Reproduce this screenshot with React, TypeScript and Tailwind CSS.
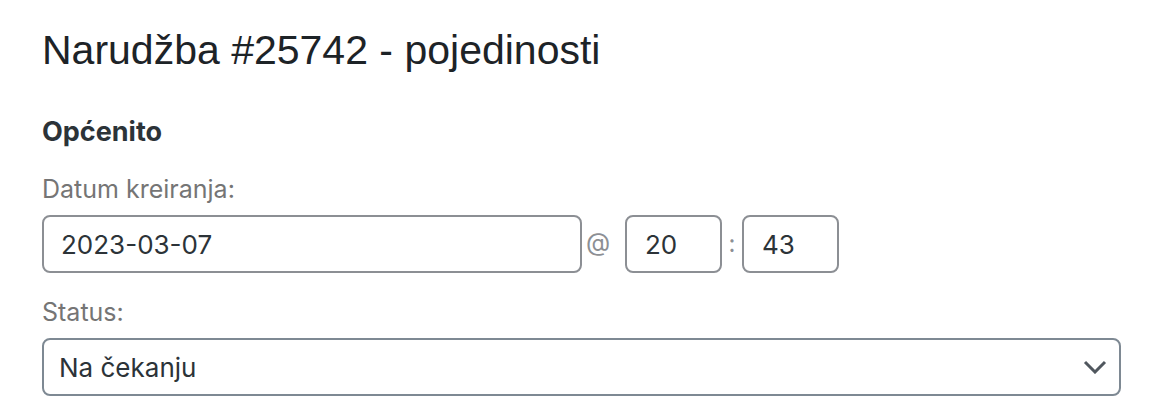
export default function App() {
  return (
    <div className="h-[412px] w-[1154px] bg-white pl-[42px] pr-[33px] pt-[25px] text-[#2c3338]" style={{ fontFamily: 'Inter, "Noto Sans", sans-serif' }}>
      <h2 className="text-[41px] leading-[50px] text-[#1d2327]" style={{ fontFamily: '"Liberation Sans", Arial, sans-serif' }}>
        Narudžba #25742 - pojedinosti
      </h2>
      <h3 className="mt-[40px] text-[27px] font-bold leading-[34px] text-[#2c3338]">Općenito</h3>
      <div className="mt-[24px]">
        <label className="block text-[25px] leading-[32px] text-[#757575]">Datum kreiranja:</label>
        <div className="mt-[10px] flex items-center">
          <div className="flex h-[58px] w-[540px] items-center rounded-[8px] border-2 border-[#8c8f94] px-[17px] text-[26px]">
            2023-03-07
          </div>
          <span className="mb-[2px] w-[43px] pl-[4px] text-[25px] text-[#8c8f94]">@</span>
          <div className="flex h-[58px] w-[97px] items-center rounded-[8px] border-2 border-[#8c8f94] px-[18px] text-[26px]">
            20
          </div>
          <span className="w-[20px] text-center text-[24px] text-[#8c8f94]">:</span>
          <div className="flex h-[58px] w-[97px] items-center rounded-[8px] border-2 border-[#8c8f94] px-[18px] text-[26px]">
            43
          </div>
        </div>
      </div>
      <div className="mt-[23px]">
        <label className="block text-[25px] leading-[32px] text-[#757575]">Status:</label>
        <div className="mt-[10px] flex h-[58px] items-center justify-between rounded-[8px] border-2 border-[#7e8993] pl-[15px] pr-[12px] text-[26px]">
          <span>Na čekanju</span>
          <svg width="24" height="14" viewBox="0 0 24 14" fill="none">
            <path d="M2 2l10 10L22 2" stroke="#50575e" strokeWidth="3" />
          </svg>
        </div>
      </div>
    </div>
  );
}
